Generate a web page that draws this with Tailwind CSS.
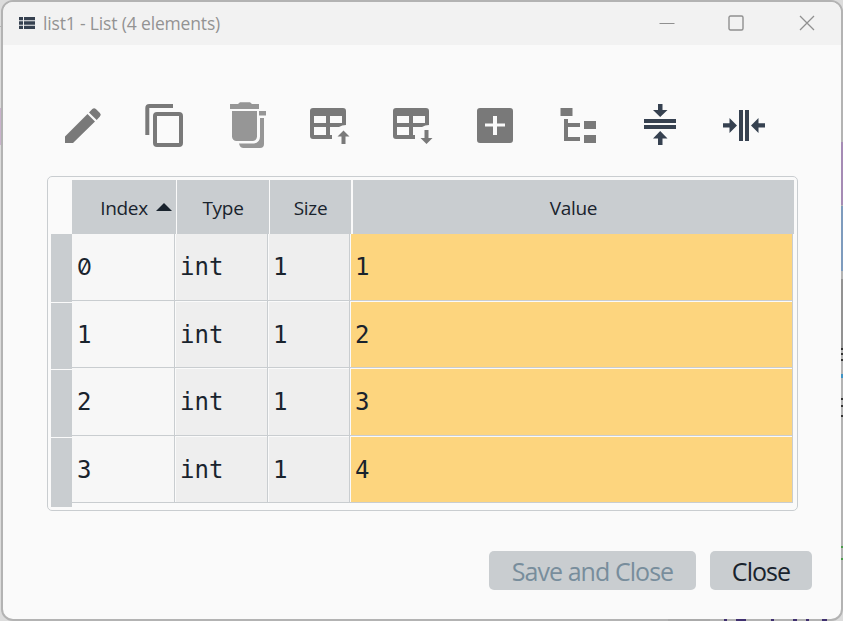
<!DOCTYPE html>
<html lang="en">
<head>
<meta charset="utf-8">
<title>list1 - List (4 elements)</title>
<script src="https://cdn.jsdelivr.net/npm/@tailwindcss/browser@4"></script>
</head>
<body class="relative w-[843px] h-[621px] overflow-hidden bg-[#dcdcdc] pl-px font-['Open_Sans',sans-serif]">
<!-- slivers of the desktop behind the window -->
<svg class="absolute inset-0" width="843" height="621" shape-rendering="crispEdges">
<path fill="#b5b5b5" d="M0 26h2v1H0z"/><path fill="#c9b3cc" d="M0 108h2v37H0z"/>
</svg>
<main class="relative flex flex-col w-[842px] h-[621px] rounded-[12px] border-2 border-[#b3b3b3] bg-[#fafafa] overflow-hidden">
<header class="flex h-[43px] shrink-0 items-center bg-[#f2f2f2] pl-[16px] pr-[26px] pb-[2px]">
<svg width="16" height="12" viewBox="0 0 16 12" class="mr-[8px]" fill="#364150"><path d="M0 0h4v3.3H0zM5 0h11v3.3H5zM0 4.3h4v3.4H0zM5 4.3h11v3.4H5zM0 8.7h4V12H0zM5 8.7h11V12H5z"/></svg>
<h1 class="text-[17.5px] leading-[24px] tracking-[-0.16px] text-[#939393] whitespace-nowrap">list1 - List (4 elements)</h1>
<div class="ml-auto flex items-center" >
<svg class="mr-[53px]" width="16" height="16" fill="none" stroke="#909090"><path d="M.5 8.5h15"/></svg>
<svg class="mr-[55px]" width="16" height="16" fill="none" stroke="#909090" stroke-width="1.4"><rect x="1" y="1" width="14" height="14" rx="1.5"/></svg>
<svg width="16" height="16" fill="none" stroke="#909090" stroke-width="1.3"><path d="M1 1l14 14M15 1L1 15"/></svg>
</div>
</header>
<nav class="h-[131px] shrink-0 pt-[45px] pl-[47px]">
<svg width="740" height="70" viewBox="50 90 740 70" fill="#797979">
<path d="M65 136.500L87.500 114l7.500 7.500L73 143h-8zM89 112.500l3.300-3.500q1.800-1.700 3.600 0l4 4q1.800 1.800 0 3.600l-3.200 3.400z"/>
<g fill="none" stroke="#797979" stroke-width="4"><path d="M147.300 135v-27a2 2 0 0 1 2-2H173"/><rect x="155" y="114" width="26" height="31" rx="2"/></g>
<g fill="#969696"><path d="M230 104h8l2-1.800h10l2 1.800h7v5h-29zM232 111h25v25.500a4.500 4.500 0 0 1-4.500 4.500h-16a4.500 4.500 0 0 1-4.500-4.500zM259 111h7v4.500h-7zM260 118h4v26a4 4 0 0 1-4 4h-16.500q-3.500 0-4.500-4.500h15q6-1 6-7z"/></g>
<g id="grid"><path fill-rule="evenodd" d="M313 108h30q3 0 3 3v14q-4 0-7 2h-9v8h2v4h-19q-3 0-3-3v-25q0-3 3-3zM314 116v7h12v-7zM330 116v7h12v-7zM314 127v8h12v-8z"/></g>
<path d="M343.500 130.500l6 6h-4V144h-4v-7.500h-4z"/>
<use href="#grid" x="83"/>
<path d="M424.500 130h4v8h4l-6 6-6-6h4z"/>
<path fill-rule="evenodd" d="M480 108h30q3 0 3 3v29q0 3-3 3h-30q-3 0-3-3v-29q0-3 3-3zM493 116v7.500h-8v3h8v8.500h4v-8.500h8v-3h-8V116z"/>
<path d="M560.500 108h12v8h-12zM564 119h4v4h12v4h-12v10h12v4h-16zM584 121h12v8h-12zM584 135h12v8h-12z"/>
<g fill="#364150"><path d="M644 119h32v4h-32zM644 125h32v4h-32zM658 104h4.500v6h5l-7.300 7-7.200-7h5zM660.200 131l7.300 7.500h-5v6.500H658v-6.500h-5z"/>
<path d="M739 110h4v31h-4zM745 110h4v31h-4zM723 123.200h6.500V118l7.500 7.500-7.500 7.500v-5.500H723zM765 123.200h-6.500V118l-7.500 7.500 7.500 7.500v-5.500h6.500z"/></g>
</svg>
</nav>
<section class="ml-[44px] flex w-[751px] h-[335px] shrink-0 rounded-[5px] border border-[#c9cdd0] pl-[3px] pt-[3px] text-[#19232d]">
<div class="flex w-[21px] flex-col gap-px pt-[54px] h-[327px]">
<div class="h-[68px] bg-[#c9cdd0]"></div><div class="h-[66px] bg-[#c9cdd0]"></div><div class="h-[67px] bg-[#c9cdd0]"></div><div class="h-[69px] bg-[#c9cdd0]"></div>
</div>
<div class="w-[723px]">
<div class="grid h-[54px] grid-cols-[104px_92px_81px_442px] grid-rows-[54px] gap-x-px text-[19px] leading-[56px] text-center tracking-[-0.3px]">
<div class="relative bg-[#c9cdd0]">Index<svg class="absolute left-[84px] top-[23px]" width="16" height="9" fill="#19232d"><path d="M0 8L8 0l8 8z"/></svg></div>
<div class="bg-[#c9cdd0]">Type</div><div class="bg-[#c9cdd0]">Size</div><div class="bg-[#c9cdd0] ml-px">Value</div>
</div>
<div class="grid w-[721px] grid-cols-[103px_93px_82px_443px] grid-rows-[67px_67px_68px_67px] font-['DejaVu_Sans_Mono',monospace] text-[24px] leading-[69px] *:border-r *:border-b *:border-[#c9cdd0] *:pl-[5px]">
<div class="bg-[#f7f7f7] leading-[66px]"><span class="font-['Inter',sans-serif] text-[23.5px] [font-feature-settings:'zero']">0</span></div><div class="bg-[#eee] shadow-[inset_1px_0_#fafafa] leading-[67px]">int</div><div class="bg-[#eee] shadow-[inset_1px_0_#fafafa] leading-[67px]">1</div><div class="bg-[#fdd57e] shadow-[inset_1px_0_#fafafa] leading-[67px]">1</div>
<div class="bg-[#f7f7f7]">1</div><div class="bg-[#eee] shadow-[inset_1px_1px_#fafafa]">int</div><div class="bg-[#eee] shadow-[inset_1px_1px_#fafafa]">1</div><div class="bg-[#fdd57e] shadow-[inset_1px_1px_#fafafa]">2</div>
<div class="bg-[#f7f7f7]">2</div><div class="bg-[#eee] shadow-[inset_1px_1px_#fafafa]">int</div><div class="bg-[#eee] shadow-[inset_1px_1px_#fafafa]">1</div><div class="bg-[#fdd57e] shadow-[inset_1px_1px_#fafafa]">3</div>
<div class="bg-[#f7f7f7]">3</div><div class="bg-[#eee] shadow-[inset_1px_1px_#fafafa]">int</div><div class="bg-[#eee] shadow-[inset_1px_1px_#fafafa]">1</div><div class="bg-[#fdd57e] shadow-[inset_1px_1px_#fafafa]">4</div>
</div>
</div>
</section>
<footer class="mt-[40px] flex justify-end gap-[14px] pr-[29px] text-[25px] leading-[40px] tracking-[-0.95px] whitespace-nowrap">
<button class="h-[39px] w-[207px] rounded-[5px] bg-[#c9cdd0] text-[#788d9c]">Save and Close</button>
<button class="h-[39px] w-[102px] rounded-[5px] bg-[#c9cdd0] text-[#19232d]">Close</button>
</footer>
</main>
<!-- coloured fragments along the window's right and bottom edges -->
<svg class="absolute inset-0" width="843" height="621" shape-rendering="crispEdges">
<path fill="#a58bb5" d="M841 142h2v63h-2z"/><path fill="#7e9bbd" d="M841 206h2v65h-2z"/>
<path fill="#929292" d="M841 279h2v70h-2z"/><path fill="#333" d="M841 348h2v2h-2zm0 5h2v2h-2zm0 6h2v2h-2zm0 39h2v2h-2zm0 7h2v2h-2zm0 10h2v2h-2z"/>
<path fill="#3f94c5" d="M841 374h2v4h-2z"/><path fill="#499c49" d="M841 546h2v2h-2zm0 12h2v2h-2z"/>
<path fill="#aaa" d="M668 619h42v2h-42z"/><path fill="#40306f" d="M724 619h3v2h-3zm12 0h10v2h-10zm35 0h3v2h-3zm22 0h4v2h-4zm13 0h3v2h-3zm16 0h5v2h-5z"/>
</svg>
</body>
</html>
